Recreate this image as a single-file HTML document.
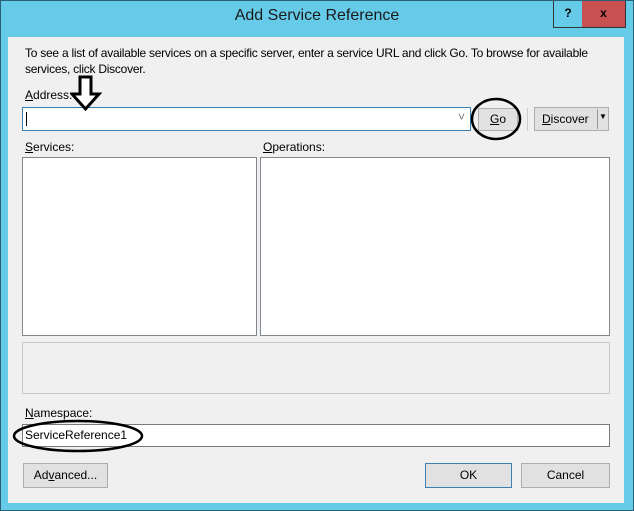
<!DOCTYPE html><html><head><style>
body{margin:0;width:634px;height:511px;overflow:hidden;font-family:"Liberation Sans",sans-serif;font-size:12px;color:#000}
.frame{position:absolute;left:0;top:0;width:632px;height:509px;background:#65cbe9;border:1px solid #2b5f73}
.title{position:absolute;left:0;width:632px;top:6px;text-align:center;font-size:16px;color:#1a1a1a}
.help{position:absolute;left:552px;top:0;width:28px;height:26px;border:1px solid #333;border-top:0;background:#65cbe9;text-align:center;font-weight:bold;line-height:24px}
.close{position:absolute;left:581px;top:0;width:43px;height:26px;border:1px solid #333;border-top:0;border-left:0;background:#c75050;text-align:center;font-weight:bold;line-height:24px}
.client{position:absolute;left:8px;top:37px;width:616px;height:466px;background:#f0f0f0}
.a{position:absolute}
.box{position:absolute;background:#fff;border:1px solid #acacac;box-sizing:border-box}
.btn{position:absolute;background:#e1e1e1;border:1px solid #adadad;box-sizing:border-box;text-align:center}
</style></head><body>
<div class="frame">
<div class="title">Add Service Reference</div>
<div class="help">?</div><div class="close">x</div>
</div>
<div class="client"></div>
<div class="a" style="left:25px;top:45px;width:600px;line-height:16px;letter-spacing:-0.25px">To see a list of available services on a specific server, enter a service URL and click Go. To browse for available services, click Discover.</div>
<div class="a" style="left:25px;top:88px"><u>A</u>ddress:</div>
<div class="box" style="left:22px;top:107px;width:449px;height:24px;border-color:#3c7fb1"><div class="a" style="left:3px;top:4px;width:1px;height:14px;background:#000"></div><div class="a" style="left:435px;top:2px;color:#777">˅</div></div>
<svg class="a" style="left:70px;top:75px" width="32" height="36"><path d="M10 2h11v17h8L15.5 34 2 19h8z" fill="#fff" stroke="#000" stroke-width="3"/></svg>
<div class="btn" style="left:478px;top:108px;width:40px;height:23px;line-height:21px"><u>G</u>o</div>
<svg class="a" style="left:470px;top:97px" width="52" height="44"><ellipse cx="26" cy="22" rx="24" ry="20" fill="none" stroke="#000" stroke-width="2.5"/></svg>
<div class="a" style="left:527px;top:108px;width:1px;height:23px;background:#ccc"></div>
<div class="btn" style="left:534px;top:107px;width:75px;height:24px;line-height:22px;text-align:left;padding-left:7px"><u>D</u>iscover</div>
<div class="a" style="left:597px;top:109px;width:1px;height:20px;background:#999"></div>
<div class="a" style="left:599px;top:112px;font-size:8px">▼</div>
<div class="a" style="left:25px;top:140px"><u>S</u>ervices:</div>
<div class="a" style="left:263px;top:140px"><u>O</u>perations:</div>
<div class="box" style="left:22px;top:157px;width:235px;height:179px;border-color:#828790"></div>
<div class="box" style="left:260px;top:157px;width:350px;height:179px;border-color:#828790"></div>
<div class="a" style="left:22px;top:342px;width:588px;height:52px;border:1px solid #c8c8c8;box-sizing:border-box"></div>
<div class="a" style="left:25px;top:406px"><u>N</u>amespace:</div>
<div class="box" style="left:22px;top:424px;width:588px;height:23px;border-color:#7a7a7a"><div class="a" style="left:2px;top:3px">ServiceReference1</div></div>
<svg class="a" style="left:12px;top:419px" width="132" height="34"><ellipse cx="66" cy="17" rx="64" ry="15" fill="none" stroke="#000" stroke-width="2.5"/></svg>
<div class="btn" style="left:23px;top:463px;width:85px;height:25px;line-height:23px">Ad<u>v</u>anced...</div>
<div class="btn" style="left:425px;top:463px;width:87px;height:25px;line-height:23px;border-color:#3c7fb1">OK</div>
<div class="btn" style="left:521px;top:463px;width:89px;height:25px;line-height:23px">Cancel</div>
</body></html>
